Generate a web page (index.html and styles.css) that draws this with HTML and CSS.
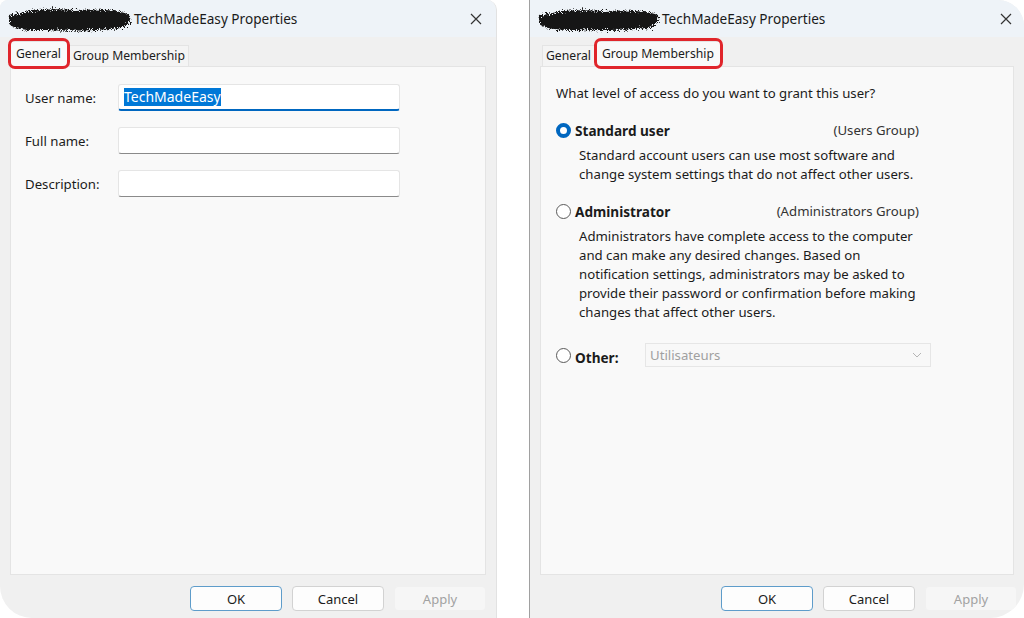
FILE: index.html
```html
<!DOCTYPE html>
<html lang="en">
<head>
    <meta charset="UTF-8">
    <title>TechMadeEasy Properties</title>
    <link rel="stylesheet" href="styles.css">
</head>
<body>
    <svg class="defs" width="0" height="0">
        <filter id="rough" x="-10%" y="-30%" width="120%" height="160%">
            <feTurbulence type="fractalNoise" baseFrequency="1.4" numOctaves="2" result="noise"/>
            <feDisplacementMap in="SourceGraphic" in2="noise" scale="9"/>
        </filter>
    </svg>

    <div class="dialog dialog-left">
        <div class="titlebar">
            <svg class="scribble" width="130" height="30" viewBox="0 0 130 30"><path d="M6 12 Q30 3 70 6 Q110 4 126 11 Q128 20 118 24 Q80 28 40 26 Q8 27 5 19 Z" fill="#141414" filter="url(#rough)"/></svg>
            <span class="title">TechMadeEasy Properties</span>
            <svg class="close" width="12" height="12" viewBox="0 0 12 12"><path d="M1 1L11 11M11 1L1 11" stroke="#333" stroke-width="1.2"/></svg>
        </div>
        <div class="tabs">
            <div class="tab active marked">General</div>
            <div class="tab">Group Membership</div>
        </div>
        <div class="panel">
            <div class="form">
                <div class="form-row">
                    <label>User name:</label>
                    <div class="field focused"><span class="sel">TechMadeEasy</span></div>
                </div>
                <div class="form-row">
                    <label>Full name:</label>
                    <div class="field"></div>
                </div>
                <div class="form-row">
                    <label>Description:</label>
                    <div class="field"></div>
                </div>
            </div>
        </div>
        <div class="buttons">
            <div class="btn default">OK</div>
            <div class="btn">Cancel</div>
            <div class="btn disabled">Apply</div>
        </div>
    </div>

    <div class="dialog dialog-right">
        <div class="titlebar">
            <svg class="scribble" width="128" height="28" viewBox="0 0 128 28"><path d="M6 11 Q30 3 68 6 Q108 4 124 10 Q126 19 116 23 Q80 26 40 25 Q8 25 5 18 Z" fill="#141414" filter="url(#rough)"/></svg>
            <span class="title">TechMadeEasy Properties</span>
            <svg class="close" width="12" height="12" viewBox="0 0 12 12"><path d="M1 1L11 11M11 1L1 11" stroke="#333" stroke-width="1.2"/></svg>
        </div>
        <div class="tabs">
            <div class="tab">General</div>
            <div class="tab active marked">Group Membership</div>
        </div>
        <div class="panel">
            <div class="access">
                <p class="question">What level of access do you want to grant this user?</p>

                <div class="option">
                    <span class="radio checked"></span>
                    <span class="opt-name">Standard user</span>
                    <span class="opt-group">(Users Group)</span>
                </div>
                <p class="opt-desc">Standard account users can use most software and change system settings that do not affect other users.</p>

                <div class="option">
                    <span class="radio"></span>
                    <span class="opt-name">Administrator</span>
                    <span class="opt-group">(Administrators Group)</span>
                </div>
                <p class="opt-desc">Administrators have complete access to the computer and can make any desired changes. Based on notification settings, administrators may be asked to provide their password or confirmation before making changes that affect other users.</p>

                <div class="option other">
                    <span class="radio"></span>
                    <span class="opt-name other-label">Other:</span>
                    <div class="select">
                        <span>Utilisateurs</span>
                        <svg width="10" height="6" viewBox="0 0 10 6"><path d="M1 1L5 5L9 1" fill="none" stroke="#b5b5b5" stroke-width="1"/></svg>
                    </div>
                </div>
            </div>
        </div>
        <div class="buttons">
            <div class="btn default">OK</div>
            <div class="btn">Cancel</div>
            <div class="btn disabled">Apply</div>
        </div>
    </div>
</body>
</html>
```

FILE: styles.css
```css
body {
    margin: 0;
    width: 1024px;
    height: 618px;
    overflow: hidden;
    background-color: #fff;
    display: flex;
    justify-content: space-between;
    font-family: "Segoe UI", "Noto Sans", sans-serif;
    font-size: 13.2px;
    color: #1b1b1b;
}
.defs {
    position: absolute;
}
.dialog {
    height: 618px;
    display: flex;
    flex-direction: column;
    background-color: #f0f0f0;
    overflow: hidden;
    box-sizing: border-box;
}
.dialog-left {
    width: 497px;
    border-radius: 8px 10px 0 32px;
    border-right: 1px solid #e2e2e2;
}
.dialog-right {
    width: 495px;
    border-radius: 0 26px 34px 0;
    border-left: 1px solid #a0a0a0;
}
.titlebar {
    height: 37px;
    flex-shrink: 0;
    display: flex;
    align-items: center;
    padding: 0 14px 0 4px;
    background-color: #eef3f8;
}
.scribble {
    flex-shrink: 0;
}
.title {
    flex: 1;
    font-size: 13.6px;
    color: #1a1a1a;
}
.dialog-right .titlebar {
    padding-left: 4px;
    padding-right: 12px;
}
.tabs {
    height: 29px;
    flex-shrink: 0;
    display: flex;
    align-items: flex-end;
    padding: 0 10px;
}
.tab {
    position: relative;
    height: 20px;
    line-height: 20px;
    padding: 0 3px;
    margin-right: 1px;
    background-color: #f4f4f4;
    border: 1px solid #e4e4e4;
    border-bottom: none;
    font-size: 12.2px;
    color: #1b1b1b;
}
.tab:first-child {
    margin-left: 2px;
}
.tab.active {
    height: 25px;
    line-height: 23px;
    padding: 0 6px 0 5px;
    margin-bottom: -1px;
    margin-left: 0;
    background-color: #f9f9f9;
    z-index: 1;
}
.tab.marked::after {
    content: "";
    position: absolute;
    top: -4px;
    left: -3px;
    right: -3px;
    bottom: -2px;
    border: 3px solid #e0252b;
    border-radius: 7px;
}
.panel {
    flex: 1;
    margin: 0 10px;
    background-color: #f9f9f9;
    border: 1px solid #e4e4e4;
}
.buttons {
    height: 43px;
    flex-shrink: 0;
    display: flex;
    justify-content: flex-end;
    gap: 10px;
    padding: 11px 10px 0;
    box-sizing: border-box;
}
.dialog-right .buttons {
    padding-right: 7px;
}
.btn {
    width: 92px;
    height: 25px;
    box-sizing: border-box;
    border: 1px solid #d2d2d2;
    border-radius: 4px;
    background-color: #fdfdfd;
    display: flex;
    align-items: center;
    justify-content: center;
    font-size: 13px;
}
.btn.default {
    border-color: #5e9cca;
}
.btn.disabled {
    border-color: #f0f0f0;
    background-color: #f6f6f6;
    color: #a2a2a2;
}

/* general tab */
.form {
    padding: 17px 0 0 14px;
    display: flex;
    flex-direction: column;
    gap: 16px;
}
.form-row {
    display: flex;
    align-items: center;
}
.form-row label {
    width: 93px;
}
.field {
    width: 282px;
    height: 27px;
    box-sizing: border-box;
    background-color: #fff;
    border: 1px solid #e5e5e5;
    border-bottom-color: #8a8a8a;
    border-radius: 3px;
    padding: 0 5px;
    display: flex;
    align-items: center;
}
.field.focused {
    border-bottom: 2px solid #0067c0;
}
.sel {
    background-color: #0078d7;
    color: #fff;
    font-size: 14px;
    line-height: 18px;
}

/* group membership tab */
.access {
    width: 363px;
    padding: 17px 0 0 15px;
}
.question {
    margin: 0;
    line-height: 19px;
}
.option {
    display: flex;
    align-items: center;
    margin-top: 18px;
    line-height: 19px;
}
.radio {
    width: 15px;
    height: 15px;
    box-sizing: border-box;
    border-radius: 50%;
    border: 1px solid #5a5a5a;
    background-color: #fff;
    margin-right: 4px;
    flex-shrink: 0;
}
.radio.checked {
    border: 4px solid #0067c0;
}
.opt-name {
    font-weight: bold;
    font-size: 13.6px;
    flex: 1;
}
.opt-group {
    color: #333;
}
.opt-desc {
    margin: 6px 0 0 23px;
    line-height: 19px;
}
.option.other {
    margin-top: 21px;
    height: 24px;
}
.other-label {
    flex: none;
    width: 70px;
    margin-top: 4px;
}
.select {
    width: 286px;
    height: 24px;
    flex-shrink: 0;
    box-sizing: border-box;
    border: 1px solid #e6e6e6;
    background-color: #f8f8f8;
    color: #a0a0a0;
    display: flex;
    align-items: center;
    justify-content: space-between;
    padding: 0 8px 0 4px;
}
```
